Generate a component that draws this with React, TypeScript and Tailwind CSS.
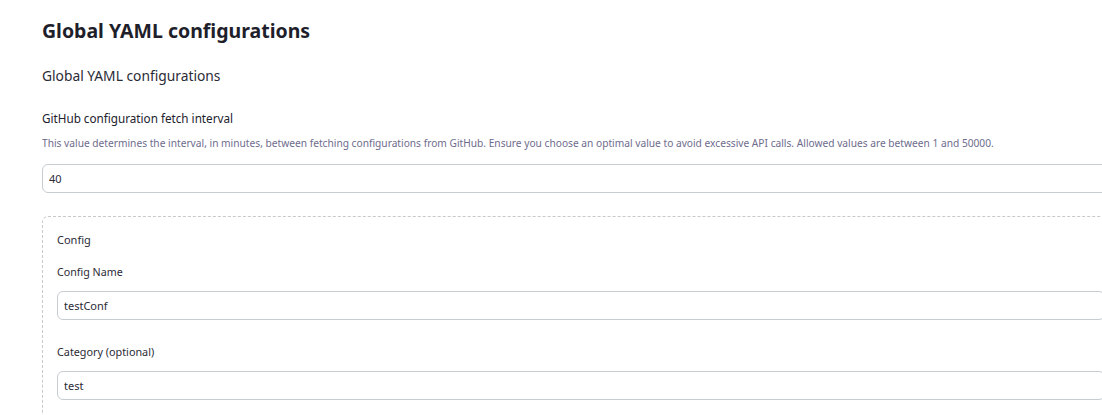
export default function App() {
  return (
    <div className="h-screen w-full overflow-hidden bg-white font-['Noto_Sans',sans-serif] text-[#1f1f2b]">
      <div className="w-[1120px] pl-[42px] pt-[17px]">
        <h1 className="text-[19.5px] font-bold leading-[28px]">Global YAML configurations</h1>

        <h2 className="mt-[21px] text-[13.8px] leading-[20px] text-[#2b2b36]">Global YAML configurations</h2>

        <div className="mt-[24px]">
          <label className="block text-[11.7px] leading-[16px] text-[#22222c]">
            GitHub configuration fetch interval
          </label>
          <p className="mt-[9px] text-[10.2px] leading-[16px] text-[#6e6c8c]">
            This value determines the interval, in minutes, between fetching configurations from GitHub. Ensure you
            choose an optimal value to avoid excessive API calls. Allowed values are between 1 and 50000.
          </p>
          <input
            readOnly
            value="40"
            className="mt-[13px] block h-[29px] w-full rounded-[6px] border border-[#c5cdd2] px-[6px] text-[11px] text-[#2b2b36] outline-none"
          />
        </div>

        <div className="mt-[23px] rounded-tl-[6px] border border-dashed border-[#c9c9c9] px-[14px] pt-[15px] pb-[20px]">
          <div className="text-[11px] leading-[16px] text-[#2b2b36]">Config</div>

          <div className="mt-[16px]">
            <label className="block text-[10.7px] leading-[16px] text-[#2b2b36]">Config Name</label>
            <input
              readOnly
              value="testConf"
              className="mt-[11px] block h-[29px] w-full rounded-[6px] border border-[#c5cdd2] px-[6px] text-[11px] text-[#2b2b36] outline-none"
            />
          </div>

          <div className="mt-[24px]">
            <label className="block text-[10.8px] leading-[16px] text-[#2b2b36]">Category (optional)</label>
            <input
              readOnly
              value="test"
              className="mt-[11px] block h-[29px] w-full rounded-[6px] border border-[#c5cdd2] px-[6px] text-[11px] text-[#2b2b36] outline-none"
            />
          </div>
        </div>
      </div>
    </div>
  );
}
